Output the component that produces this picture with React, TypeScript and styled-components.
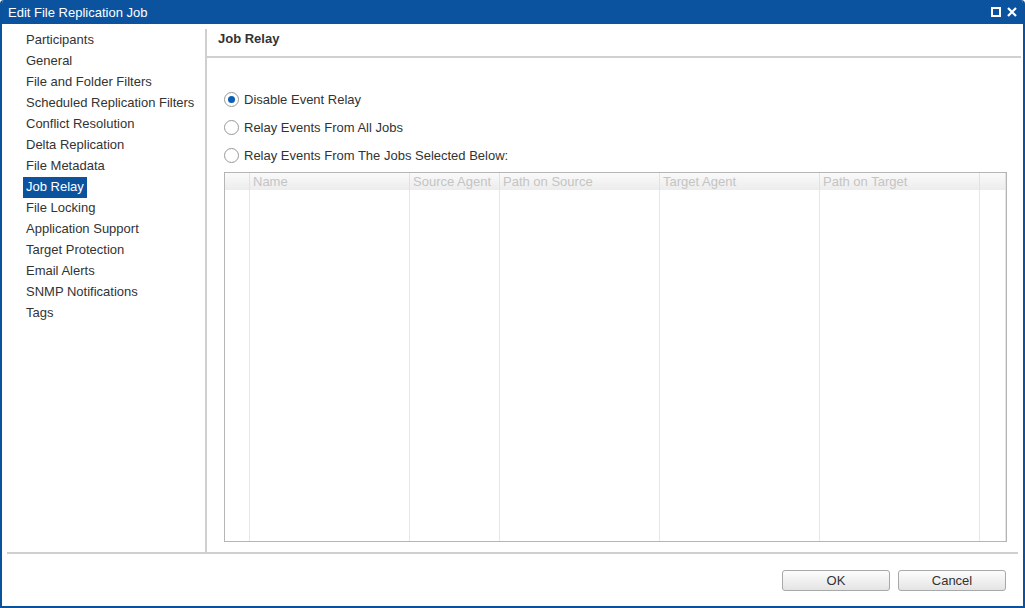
import React from "react";
import styled, { createGlobalStyle } from "styled-components";

const G = createGlobalStyle`
  html,body{margin:0;padding:0;background:#fff;}
  body{font-family:"Liberation Sans",Arial,sans-serif;font-size:13px;color:#333;}
`;
const Win = styled.div`
  width:1025px;height:608px;box-sizing:border-box;border:2px solid #0b529c;border-top:0;
  border-radius:4px 4px 0 0;display:flex;flex-direction:column;background:#fff;overflow:hidden;
`;
const Title = styled.div`
  height:24px;background:#0b539f;color:#fff;display:flex;align-items:center;
  justify-content:space-between;padding:0 8px 0 8px;font-size:13px;margin:0 -2px;
`;
const Icons = styled.div`display:flex;gap:6px;align-items:center;`;
const Main = styled.div`flex:1;display:flex;padding:5px 0 0 5px;min-height:0;`;
const Nav = styled.div`
  width:198px;border-right:2px solid #cfcfcf;display:flex;flex-direction:column;padding-top:1px;
`;
const NavItem = styled.div<{ $sel?: boolean }>`
  height:21px;line-height:20px;padding:0 3px;margin-left:16px;align-self:flex-start;
  background:${p => (p.$sel ? "#0b539f" : "transparent")};color:${p => (p.$sel ? "#fff" : "#333")};
`;
const Content = styled.div`flex:1;display:flex;flex-direction:column;padding-right:2px;`;
const Head = styled.div`
  height:27px;border-bottom:2px solid #d0d0d0;font-weight:bold;padding-left:11px;line-height:20px;
`;
const Body = styled.div`flex:1;padding:27px 14px 10px 17px;display:flex;flex-direction:column;`;
const Radio = styled.label`display:flex;align-items:center;gap:5px;height:28px;`;
const Dot = styled.span<{ $on?: boolean }>`
  width:13px;height:13px;border-radius:50%;border:1px solid #999;background:#fff;
  display:flex;align-items:center;justify-content:center;
  &::after{content:"";width:7px;height:7px;border-radius:50%;background:${p => (p.$on ? "#0b5fb4" : "transparent")};}
`;
const Table = styled.div`
  margin-top:3px;flex:1;border:1px solid #b5b5b5;display:grid;
  grid-template-columns:25px 160px 90px 160px 160px 160px 1fr;grid-template-rows:17px 1fr;
`;
const Th = styled.div`
  background:linear-gradient(#fafafa,#ececec);color:#c4c4c4;border-right:1px solid #e2e2e2;
  padding-left:3px;line-height:17px;white-space:nowrap;overflow:hidden;
`;
const Td = styled.div`border-right:1px solid #e6e6e6;`;
const Foot = styled.div`
  height:54px;margin:0 5px;border-top:2px solid #cfcfcf;display:flex;justify-content:flex-end;
  align-items:center;gap:8px;padding-right:12px;box-sizing:border-box;
`;
const Btn = styled.button`
  width:108px;height:21px;border:1px solid #a8a8a8;border-radius:3px;font:inherit;color:#333;
  background:linear-gradient(#fdfdfd,#e4e4e4);
`;
const cols = ["", "Name", "Source Agent", "Path on Source", "Target Agent", "Path on Target", ""];
const nav = ["Participants","General","File and Folder Filters","Scheduled Replication Filters","Conflict Resolution","Delta Replication","File Metadata","Job Relay","File Locking","Application Support","Target Protection","Email Alerts","SNMP Notifications","Tags"];
export default function App() {
  return (<><G /><Win>
    <Title><span>Edit File Replication Job</span><Icons>
      <svg width="10" height="10"><rect x="1" y="1" width="8" height="8" fill="none" stroke="#fff" strokeWidth="2"/></svg>
      <svg width="10" height="10"><path d="M1 1L9 9M9 1L1 9" stroke="#fff" strokeWidth="2.2"/></svg>
    </Icons></Title>
    <Main>
      <Nav>{nav.map(n => <NavItem key={n} $sel={n === "Job Relay"}>{n}</NavItem>)}</Nav>
      <Content>
        <Head>Job Relay</Head>
        <Body>
          <Radio><Dot $on />Disable Event Relay</Radio>
          <Radio><Dot />Relay Events From All Jobs</Radio>
          <Radio><Dot />Relay Events From The Jobs Selected Below:</Radio>
          <Table>
            {cols.map((c, i) => <Th key={i}>{c}</Th>)}
            {cols.map((_, i) => <Td key={"d" + i} />)}
          </Table>
        </Body>
      </Content>
    </Main>
    <Foot><Btn>OK</Btn><Btn>Cancel</Btn></Foot>
  </Win></>);
}
